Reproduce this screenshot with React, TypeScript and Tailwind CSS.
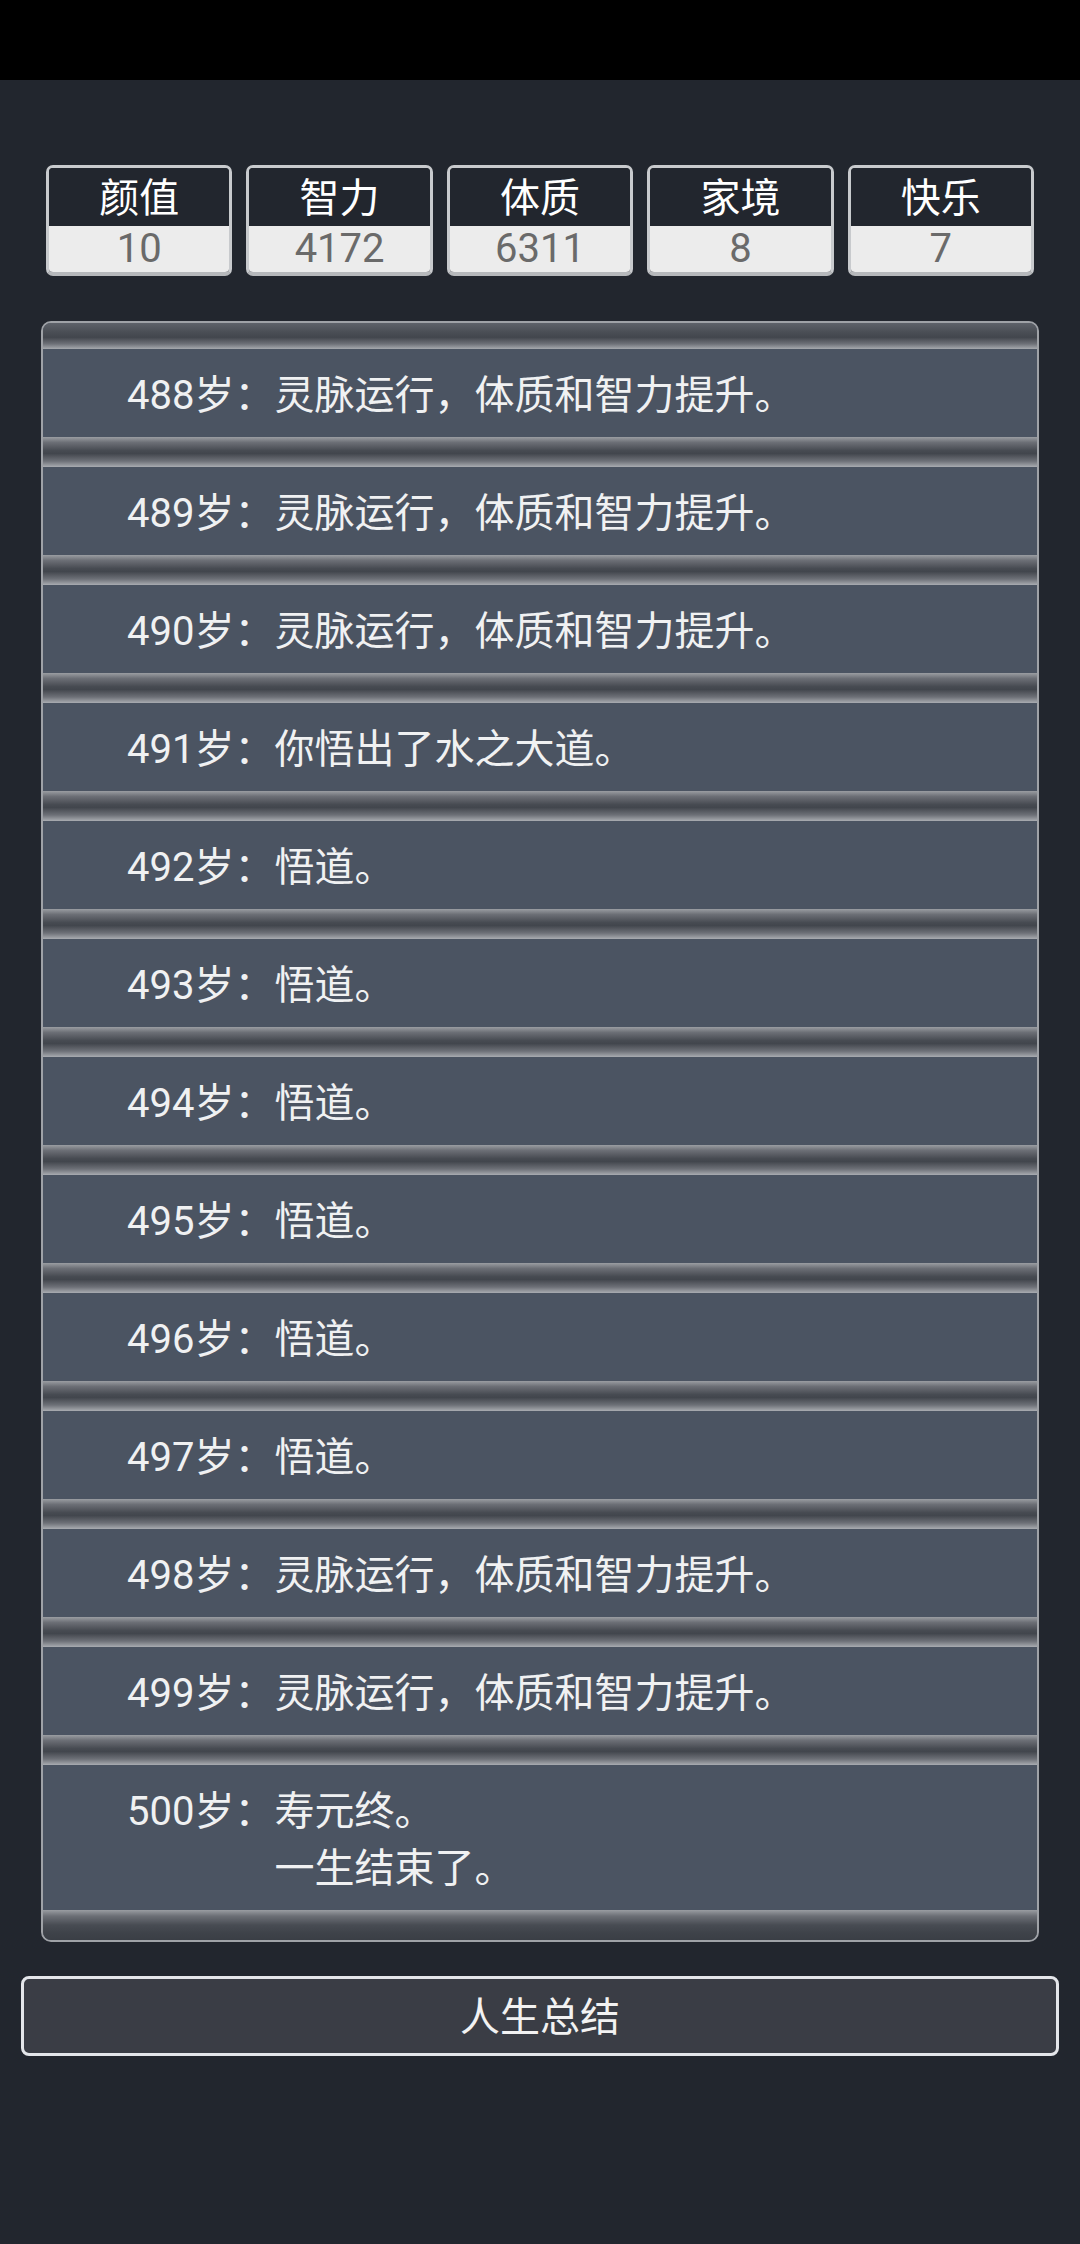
import React from "react";

const stats = [
  { label: "颜值", value: "10" },
  { label: "智力", value: "4172" },
  { label: "体质", value: "6311" },
  { label: "家境", value: "8" },
  { label: "快乐", value: "7" },
];

const rows: { age: number; lines: string[] }[] = [
  { age: 488, lines: ["灵脉运行，体质和智力提升。"] },
  { age: 489, lines: ["灵脉运行，体质和智力提升。"] },
  { age: 490, lines: ["灵脉运行，体质和智力提升。"] },
  { age: 491, lines: ["你悟出了水之大道。"] },
  { age: 492, lines: ["悟道。"] },
  { age: 493, lines: ["悟道。"] },
  { age: 494, lines: ["悟道。"] },
  { age: 495, lines: ["悟道。"] },
  { age: 496, lines: ["悟道。"] },
  { age: 497, lines: ["悟道。"] },
  { age: 498, lines: ["灵脉运行，体质和智力提升。"] },
  { age: 499, lines: ["灵脉运行，体质和智力提升。"] },
  { age: 500, lines: ["寿元终。", "一生结束了。"] },
];

const font = { fontFamily: 'Roboto, "Noto Sans CJK SC", sans-serif' };

function Sep({ kind }: { kind: "top" | "mid" | "bottom" }) {
  if (kind === "top")
    return (
      <div className="h-[26px] bg-[linear-gradient(to_bottom,#5e626a_0%,#4a4e55_35%,#42464d_55%,#6d7077_80%,#a6a9ae_100%)]" />
    );
  if (kind === "bottom")
    return (
      <div className="h-[30px] bg-[linear-gradient(to_bottom,#9a9da2_0%,#6c6f76_20%,#484c53_50%,#3f434a_75%,#3a3e45_100%)]" />
    );
  return (
    <div className="h-[30px] bg-[linear-gradient(to_bottom,#9a9da2_0%,#6c6f76_18%,#474b52_45%,#42464d_55%,#6d7077_80%,#a9acb1_100%)]" />
  );
}

export default function App() {
  return (
    <div className="min-h-[2244px] w-[1080px] bg-[#22262e] flex flex-col" style={font}>
      <div className="h-[80px] bg-black" />
      <div className="mt-[85px] px-[46px] grid grid-cols-5 gap-[14px]">
        {stats.map((s) => (
          <div
            key={s.label}
            className="rounded-[7px] border-[3px] border-b-[4px] border-[#c8cacd] border-b-[#b6b8bb] overflow-hidden"
          >
            <div className="h-[58px] pt-[3px] bg-[#22262e] text-white text-[40px] leading-[55px] text-center">
              {s.label}
            </div>
            <div className="h-[46px] bg-[#ececec] text-[#6a6a6a] text-[40px] leading-[46px] text-center">
              {s.value}
            </div>
          </div>
        ))}
      </div>

      <div className="mt-[45px] mx-[41px] rounded-[10px] border-2 border-[#9fa2a7] overflow-hidden bg-[#4b5462]">
        <Sep kind="top" />
        {rows.map((r, i) => (
          <React.Fragment key={r.age}>
            {i > 0 && <Sep kind="mid" />}
            <div className="flex pl-[84px] pt-[18px] pb-[13px] text-[40px] leading-[57px] text-[#f0f1f2] bg-[#4b5462]">
              <span className="shrink-0">{r.age}岁：</span>
              <div className="flex flex-col">
                {r.lines.map((l, j) => (
                  <span key={j}>{l}</span>
                ))}
              </div>
            </div>
          </React.Fragment>
        ))}
        <Sep kind="bottom" />
      </div>

      <div className="mt-[34px] mx-[21px] h-[80px] pt-[3px] rounded-[8px] border-[3px] border-[#e4e6ea] bg-[#3a3d45] flex items-center justify-center text-[40px] text-[#f2f2f2]">
        人生总结
      </div>
    </div>
  );
}
